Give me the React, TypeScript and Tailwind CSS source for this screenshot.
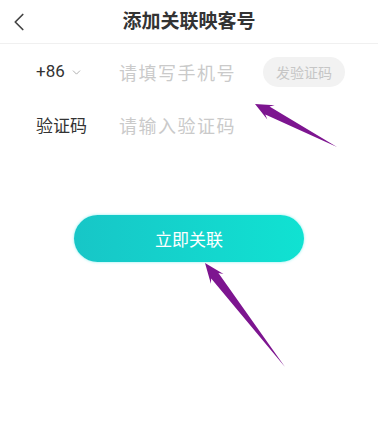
import React from "react";
import { ChevronLeft, ChevronDown } from "lucide-react";

export default function App() {
  return (
    <div className="relative w-[378px] h-[447px] bg-white overflow-hidden font-['Noto_Sans_CJK_SC','Noto_Sans',sans-serif]">
      <div className="relative h-[44px] flex items-center justify-center border-b border-[#f0f0f0]">
        <ChevronLeft className="absolute left-[4px] top-[7px] w-[30px] h-[30px] text-[#444]" strokeWidth={1.4} />
        <h1 className="text-[19px] font-semibold text-[#333] mt-[-2px]">添加关联映客号</h1>
      </div>

      <div className="px-[36px] pt-[13px]">
        <div className="flex items-center h-[30px]">
          <div className="w-[83px] flex items-center text-[17px] text-[#333] font-['Roboto','Noto_Sans',sans-serif]">
            +86
            <ChevronDown className="ml-[5px] w-[13px] h-[13px] text-[#999]" strokeWidth={1.4} />
          </div>
          <span className="text-[18px] text-[#cacaca] tracking-[1.5px]">请填写手机号</span>
          <div className="ml-auto mr-[-3px] w-[82px] h-[30px] rounded-full bg-[#f2f2f2] flex items-center justify-center text-[14px] text-[#c6c6c6]">
            发验证码
          </div>
        </div>
        <div className="flex items-center h-[30px] mt-[23px]">
          <span className="w-[83px] text-[17px] text-[#333]">验证码</span>
          <span className="text-[18px] text-[#cacaca] tracking-[1.5px]">请输入验证码</span>
        </div>
      </div>

      <div className="flex justify-center mt-[75px]">
        <button className="w-[230px] h-[47px] rounded-full bg-gradient-to-r from-[#17c6c7] to-[#10e2d2] text-white text-[17px] shadow-[0_0_3px_rgba(60,230,230,0.6)]">
          立即关联
        </button>
      </div>

      <svg className="absolute inset-0 pointer-events-none" width="378" height="447">
        <polygon
          points="255,104 274.7,105.3 269.5,106.5 337,147 265.3,114.5 267.3,119.5"
          fill="#7d1590"
        />
        <polygon
          points="205,263 223.5,274 218.4,273 285,367 211.2,278.4 210.9,283.8"
          fill="#7d1590"
        />
      </svg>
    </div>
  );
}
